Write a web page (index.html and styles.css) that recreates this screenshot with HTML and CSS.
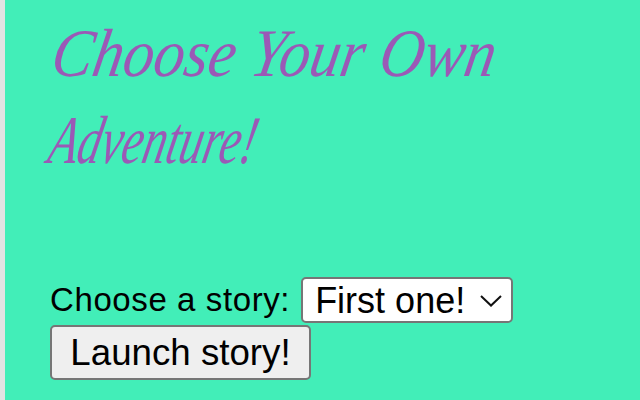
FILE: index.html
```html
<!DOCTYPE html>
<html lang="en">
<head>
<meta charset="utf-8">
<title>Choose Your Own Adventure!</title>
<link rel="stylesheet" href="styles.css">
</head>
<body>
<main class="page">
  <h1 class="title"><span class="title-line">Choose Your Own</span><span class="title-line title-line-second">Adventure!</span></h1>
  <form class="story-form">
    <div class="story-row">
      <label class="story-label" for="story">Choose a story:</label>
      <span class="select-wrap">
        <select class="story-select" id="story"><option>First one!</option></select>
        <svg class="chevron" width="22" height="12" viewBox="0 0 22 12" aria-hidden="true"><path d="M1 1 L11 10.5 L21 1" fill="none" stroke="#111" stroke-width="2"/></svg>
      </span>
    </div>
    <button class="launch" type="button">Launch story!</button>
  </form>
</main>
</body>
</html>
```
FILE: styles.css
```css
html, body { margin: 0; height: 100%; overflow: hidden; }
body { background: #42eeb8; }
.page {
  box-sizing: border-box;
  height: 400px;
  border-left: 5px solid #e3e3e3;
  padding: 10px 0 0 45px;
  font-family: "Liberation Sans", Arial, sans-serif;
}
.title {
  margin: 0;
  font-family: "Liberation Serif", serif;
  font-style: italic;
  font-weight: 400;
  font-size: 68px;
  line-height: 87px;
  color: #9b59b6;
  height: 267px;
}
.title-line {
  display: block;
  white-space: nowrap;
  transform-origin: 0 70%;
  transform: skewX(-10deg) scaleX(0.9);
}
.title-line-second { transform: skewX(-12deg) scaleX(0.69); margin-left: -3px; }
.story-row { display: flex; align-items: center; height: 46px; margin-bottom: 2px; }
.story-form { display: block; }
.story-label { font-size: 33px; letter-spacing: 0.6px; color: #000; margin-right: 11px; }
.select-wrap { position: relative; display: block; }
.story-select {
  appearance: none;
  display: block;
  box-sizing: border-box;
  width: 212px;
  height: 46px;
  padding: 0 0 0 12px;
  border: 2px solid #767676;
  border-radius: 5px;
  background: #fff;
  color: #000;
  font: 36px "Liberation Sans", Arial, sans-serif;
}
.chevron { position: absolute; right: 11px; top: 18px; pointer-events: none; }
.launch {
  display: block;
  box-sizing: border-box;
  width: 261px;
  height: 55px;
  padding: 0;
  border: 2px solid #767676;
  border-radius: 5px;
  background: #efefef;
  color: #000;
  font: 36.7px "Liberation Sans", Arial, sans-serif;
}
```
